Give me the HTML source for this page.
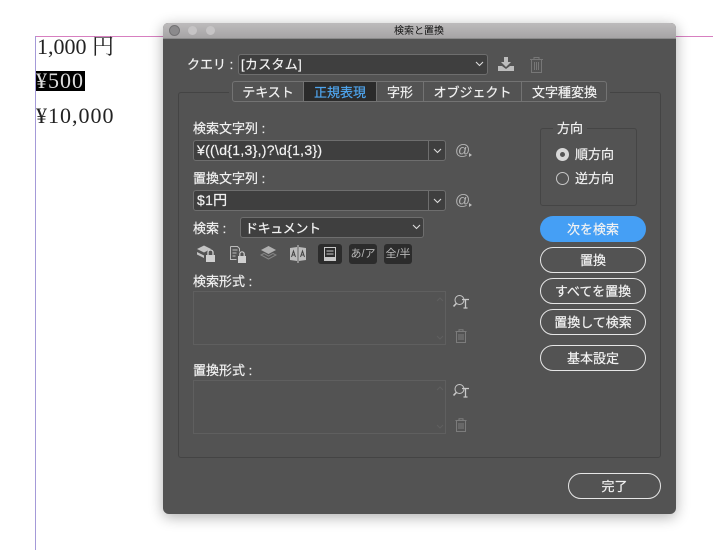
<!DOCTYPE html>
<html lang="ja">
<head>
<meta charset="utf-8">
<style>
html,body{margin:0;padding:0;background:#fff}
#p{position:relative;width:713px;height:550px;overflow:hidden;background:#fff;font-family:"Liberation Sans","Noto Sans CJK JP",sans-serif}
#p div,#p span,#p svg{position:absolute;box-sizing:border-box}
.t{color:#f2f2f2;font-size:13px;line-height:18px;white-space:nowrap;-webkit-text-stroke:.2px #f2f2f2}
.doc{font-family:"Liberation Serif","Noto Serif CJK SC",serif;font-size:22px;letter-spacing:1px;line-height:24px;color:#222;white-space:nowrap}
.fld{background:#3f3f3f;border:1px solid #6e6e6e;border-radius:3px;height:21px;color:#f2f2f2;font-size:13px;line-height:19px;white-space:nowrap;padding-left:2px;-webkit-text-stroke:.2px #f2f2f2}
.btn{border:1.5px solid #e6e6e6;border-radius:13px;color:#f2f2f2;font-size:13px;text-align:center;line-height:25px;left:540px;width:106px;height:26px;white-space:nowrap;-webkit-text-stroke:.2px #f2f2f2}
.tab{top:82px;height:20px;text-align:center;color:#f2f2f2;font-size:13px;line-height:21px;white-space:nowrap;-webkit-text-stroke:.2px currentColor}
.sq{top:244px;height:20px;background:#2c2c2c;border-radius:3px;color:#b8b8b8;font-size:11px;line-height:20px;text-align:center;white-space:nowrap}
.box{left:193px;width:253px;height:54px;border:1px solid #5f5f5f}
</style>
</head>
<body>
<div id="p">
<div style="left:35px;top:36px;width:678px;height:1px;background:#d77fc0"></div>
<div style="left:35px;top:36px;width:1px;height:514px;background:#a49ad8"></div>
<div class="doc" style="left:37px;top:35px;letter-spacing:0">1,000 円</div>
<div style="left:36px;top:71px;width:49px;height:20px;background:#000"></div>
<div class="doc" style="left:36px;top:69px;color:#ddd">¥500</div>
<div class="doc" style="left:36px;top:104px">¥10,000</div>

<div style="left:163px;top:23px;width:513px;height:491px;background:#535353;border-radius:5px 5px 6px 6px;box-shadow:0 3px 14px rgba(0,0,0,.32);overflow:hidden">
  <div style="left:0;top:0;width:513px;height:16px;background:linear-gradient(#bdbbbc,#a6a4a5);border-bottom:1px solid #8a8a8a"></div>
</div>
<div style="left:169px;top:25px;width:11px;height:11px;border-radius:50%;background:#8b8a8c;border:1px solid #737274"></div>
<div style="left:188px;top:26px;width:9px;height:9px;border-radius:50%;background:#c6c4c5"></div>
<div style="left:206px;top:26px;width:9px;height:9px;border-radius:50%;background:#c6c4c5"></div>
<div style="left:394px;top:25px;font-size:10px;line-height:14px;color:#111;white-space:nowrap">検索と置換</div>

<div class="t" style="left:187px;top:56px">クエリ :</div>
<div class="fld" style="left:238px;top:54px;width:250px;line-height:20px;letter-spacing:.3px">[カスタム]</div>
<svg style="left:475px;top:61px" width="9" height="6" viewBox="0 0 9 6"><path d="M1 1L4.500 4.500L8 1" fill="none" stroke="#ddd" stroke-width="1.100"/></svg>
<svg style="left:497px;top:56px" width="18" height="17" viewBox="0 0 18 17"><path d="M7 1h4v5h3l-5 5-5-5h3z" fill="#bdbdbd"/><path d="M1 10h4l4 3 4-3h4v5H1z" fill="#bdbdbd"/></svg>
<svg style="left:529px;top:56px" width="15" height="18" viewBox="0 0 15 18" fill="none" stroke="#777"><path d="M1 3.500h13M5 3.500V1.500h5v2M2.500 3.500v13h10v-13M5.500 6v8M7.500 6v8M9.500 6v8"/></svg>

<div style="left:178px;top:92px;width:483px;height:366px;border:1px solid #444;border-radius:3px"></div>

<div style="left:229px;top:88px;width:381px;height:8px;background:#535353"></div>
<div style="left:232px;top:81px;width:375px;height:21px;border:1px solid #737373;border-radius:3px;background:#535353"></div>
<div style="left:304px;top:82px;width:72px;height:19px;background:#2b2b2b"></div>
<div style="left:303px;top:82px;width:1px;height:19px;background:#737373"></div>
<div style="left:376px;top:82px;width:1px;height:19px;background:#737373"></div>
<div style="left:423px;top:82px;width:1px;height:19px;background:#737373"></div>
<div style="left:521px;top:82px;width:1px;height:19px;background:#737373"></div>
<div class="tab" style="left:233px;width:70px">テキスト</div>
<div class="tab" style="left:304px;width:72px;color:#4fa5ee">正規表現</div>
<div class="tab" style="left:377px;width:46px">字形</div>
<div class="tab" style="left:424px;width:97px">オブジェクト</div>
<div class="tab" style="left:522px;width:85px">文字種変換</div>

<div class="t" style="left:193px;top:120px">検索文字列 :</div>
<div class="fld" style="left:193px;top:140px;width:253px;font-size:14px;letter-spacing:.3px;padding-left:3px">¥((\d{1,3},)?\d{1,3})</div>
<div style="left:428px;top:141px;width:1px;height:19px;background:#6e6e6e"></div>
<svg style="left:433px;top:148px" width="9" height="6" viewBox="0 0 9 6"><path d="M1 1L4.500 4.500L8 1" fill="none" stroke="#ddd" stroke-width="1.100"/></svg>
<div style="left:455px;top:141px;color:#b4b4b4;font-size:15px;line-height:20px">@</div>
<div style="left:469px;top:153px;width:0;height:0;border-left:3px solid #bbb;border-top:2.500px solid transparent;border-bottom:2.500px solid transparent"></div>

<div class="t" style="left:193px;top:170px">置換文字列 :</div>
<div class="fld" style="left:193px;top:190px;width:253px;font-size:14px;letter-spacing:.3px;padding-left:3px">$1円</div>
<div style="left:428px;top:191px;width:1px;height:19px;background:#6e6e6e"></div>
<svg style="left:433px;top:198px" width="9" height="6" viewBox="0 0 9 6"><path d="M1 1L4.500 4.500L8 1" fill="none" stroke="#ddd" stroke-width="1.100"/></svg>
<div style="left:455px;top:191px;color:#b4b4b4;font-size:15px;line-height:20px">@</div>
<div style="left:469px;top:203px;width:0;height:0;border-left:3px solid #bbb;border-top:2.500px solid transparent;border-bottom:2.500px solid transparent"></div>

<div class="t" style="left:193px;top:220px">検索 :</div>
<div class="fld" style="left:240px;top:217px;width:184px;padding-left:4px;line-height:21px;letter-spacing:-.4px">ドキュメント</div>
<svg style="left:412px;top:224px" width="9" height="6" viewBox="0 0 9 6"><path d="M1 1L4.500 4.500L8 1" fill="none" stroke="#ddd" stroke-width="1.100"/></svg>

<svg style="left:196px;top:244px" width="20" height="19" viewBox="0 0 20 19"><path d="M1 5l7-3.500 7 3.500-7 3.500z" fill="#c4c4c4"/><path d="M1 8l7 3.500V14L1 10.500z" fill="#c4c4c4"/><rect x="10" y="11" width="9" height="7" fill="#d0d0d0"/><path d="M12 11V8.500a2.500 2.500 0 0 1 5 0V11" fill="none" stroke="#d0d0d0" stroke-width="1.300"/></svg>
<svg style="left:230px;top:245px" width="18" height="19" viewBox="0 0 18 19"><path d="M.5 1.500h7l2 2v3M.5 1.500v13h6" fill="none" stroke="#bbb"/><path d="M2.500 5h5M2.500 8h4M2.500 11h3" stroke="#bbb"/><rect x="8" y="11" width="8" height="7" fill="#d0d0d0"/><path d="M9.800 11V9a2.200 2.200 0 0 1 4.400 0v2" fill="none" stroke="#d0d0d0" stroke-width="1.200"/></svg>
<svg style="left:260px;top:245px" width="17" height="17" viewBox="0 0 17 17"><path d="M1 5l7.500-4L16 5l-7.500 4z" fill="#b0b0b0"/><path d="M1 10l3-1.500 4.500 2.500 4.500-2.500 3 1.500-7.500 4z" fill="none" stroke="#858585"/></svg>
<svg style="left:289px;top:245px" width="18" height="18" viewBox="0 0 18 18"><path d="M1 3l7 -1v14l-7-1zM17 3l-7-1v14l7-1z" fill="#bcbcbc"/><path d="M9 0v18" stroke="#ccc"/><path d="M2.500 12l2-6 2 6M3.200 10h2.600M11.500 12l2-6 2 6M12.200 10h2.600" fill="none" stroke="#444"/></svg>
<div class="sq" style="left:318px;width:24px"></div>
<svg style="left:323px;top:246px" width="14" height="16" viewBox="0 0 14 16" fill="none" stroke="#c8c8c8"><path d="M1.500 1.500h11v13h-11zM3.500 5h7M3.500 8h7"/><path d="M1.500 11.500h11v3h-11z" fill="#c8c8c8"/></svg>
<div class="sq" style="left:349px;width:28px">あ/ア</div>
<div class="sq" style="left:384px;width:28px">全/半</div>

<div class="t" style="left:193px;top:273px">検索形式 :</div>
<div class="box" style="top:291px"></div>
<svg style="left:436px;top:296px" width="8" height="46" viewBox="0 0 8 46" fill="none" stroke="#5f5f5f"><path d="M1 5l3-3 3 3M1 40l3 3 3-3"/></svg>
<svg style="left:453px;top:294px" width="18" height="18" viewBox="0 0 18 18" fill="none" stroke="#c8c8c8"><circle cx="6.500" cy="6" r="4.500"/><path d="M3.300 9.500L.5 12.500" stroke-width="1.600"/><path d="M9 5.500h7M12.500 5.500v8.500M10.500 14h4" stroke-width="1.300"/></svg>
<svg style="left:455px;top:329px" width="12" height="14" viewBox="0 0 12 14" fill="none" stroke="#7c7c7c"><path d="M.5 2.500h11M4 2.500V.8h4v1.700M1.500 2.500v11h9v-11M4 5v6M6 5v6M8 5v6"/></svg>

<div class="t" style="left:193px;top:362px">置換形式 :</div>
<div class="box" style="top:380px"></div>
<svg style="left:436px;top:385px" width="8" height="46" viewBox="0 0 8 46" fill="none" stroke="#5f5f5f"><path d="M1 5l3-3 3 3M1 40l3 3 3-3"/></svg>
<svg style="left:453px;top:383px" width="18" height="18" viewBox="0 0 18 18" fill="none" stroke="#c8c8c8"><circle cx="6.500" cy="6" r="4.500"/><path d="M3.300 9.500L.5 12.500" stroke-width="1.600"/><path d="M9 5.500h7M12.500 5.500v8.500M10.500 14h4" stroke-width="1.300"/></svg>
<svg style="left:455px;top:418px" width="12" height="14" viewBox="0 0 12 14" fill="none" stroke="#7c7c7c"><path d="M.5 2.500h11M4 2.500V.8h4v1.700M1.500 2.500v11h9v-11M4 5v6M6 5v6M8 5v6"/></svg>

<div style="left:540px;top:128px;width:97px;height:78px;border:1px solid #454545;border-radius:3px"></div>
<div style="left:553px;top:122px;width:34px;height:12px;background:#535353"></div>
<div class="t" style="left:557px;top:120px">方向</div>
<div style="left:556px;top:148px;width:13px;height:13px;border-radius:50%;background:#d8d8d8"></div>
<div style="left:560px;top:152px;width:5px;height:5px;border-radius:50%;background:#555"></div>
<div class="t" style="left:575px;top:146px">順方向</div>
<div style="left:556px;top:172px;width:13px;height:13px;border-radius:50%;border:1px solid #c8c8c8"></div>
<div class="t" style="left:575px;top:170px">逆方向</div>

<div class="btn" style="top:216px;background:#459ff5;border:0;line-height:28px">次を検索</div>
<div class="btn" style="top:247px">置換</div>
<div class="btn" style="top:278px">すべてを置換</div>
<div class="btn" style="top:309px">置換して検索</div>
<div class="btn" style="top:345px">基本設定</div>
<div class="btn" style="left:568px;top:473px;width:93px">完了</div>
</div>
</body>
</html>
